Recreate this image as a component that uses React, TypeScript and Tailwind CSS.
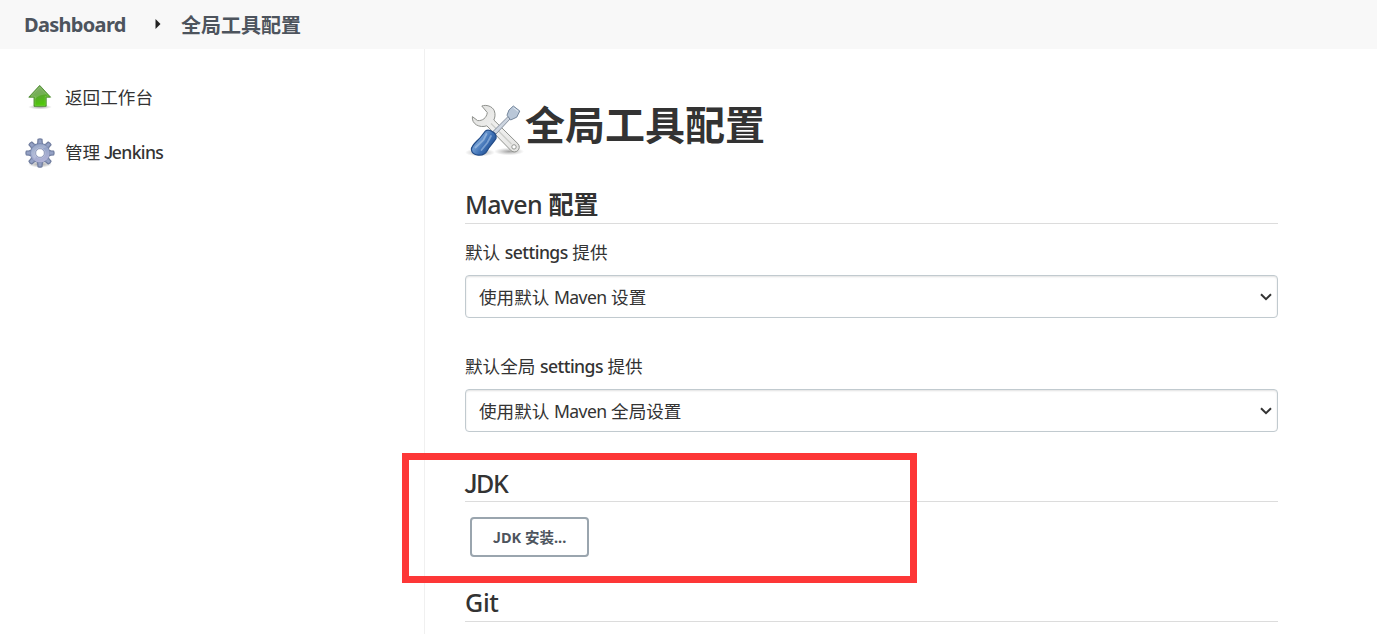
import React from "react";

function UpArrowIcon() {
  return (
    <svg width="30" height="30" viewBox="0 0 30 30" className="shrink-0">
      <defs>
        <linearGradient id="up-fill" x1="0" y1="0" x2="0.3" y2="1">
          <stop offset="0" stopColor="#6f9f55" />
          <stop offset="0.5" stopColor="#5a9f35" />
          <stop offset="1" stopColor="#4fc80a" />
        </linearGradient>
        <radialGradient id="up-shadow">
          <stop offset="0" stopColor="#000" stopOpacity="0.35" />
          <stop offset="1" stopColor="#000" stopOpacity="0" />
        </radialGradient>
      </defs>
      <ellipse cx="15" cy="25" rx="12" ry="2.4" fill="url(#up-shadow)" />
      <path d="M14.7 3.4 25.6 15.2H21.2V24.3H9V15.2H3.8Z" fill="url(#up-fill)" stroke="#4c8a30" strokeWidth="0.9" strokeLinejoin="round" />
      <path d="M14.7 5 23.4 14.3H20.2V23.3H10V14.3H6Z" fill="none" stroke="#b9eb8f" strokeOpacity="0.3" strokeWidth="0.8" />
      <path d="M14.7 4.4 22 12.2Q14 12.5 10 17V14.5H5.5Z" fill="#fff" opacity="0.16" />
    </svg>
  );
}

function GearIcon() {
  const teeth = [0, 45, 90, 135, 180, 225, 270, 315];
  return (
    <svg width="30" height="30" viewBox="0 0 30 30" className="mt-px shrink-0">
      <defs>
        <linearGradient id="gear-fill" gradientUnits="userSpaceOnUse" x1="10" y1="1" x2="18" y2="29">
          <stop offset="0" stopColor="#6f83ae" />
          <stop offset="0.45" stopColor="#98a6ca" />
          <stop offset="1" stopColor="#bdb8dc" />
        </linearGradient>
        <radialGradient id="gear-shadow">
          <stop offset="0" stopColor="#000" stopOpacity="0.4" />
          <stop offset="1" stopColor="#000" stopOpacity="0" />
        </radialGradient>
      </defs>
      <ellipse cx="15" cy="26.3" rx="12" ry="3.2" fill="url(#gear-shadow)" />
      <g stroke="#6f7c9e" strokeWidth="1.2" strokeLinejoin="round" fill="#93a0c4">
        {teeth.map((a) => (
          <path key={a} d="M11.4 7.5 12.8 4.4 13 1.4Q15 .5 17 1.4L17.2 4.4 18.6 7.5Z" transform={`rotate(${a} 15 15)`} />
        ))}
        <circle cx="15" cy="15" r="9.2" />
      </g>
      <circle cx="15" cy="15" r="9.6" fill="url(#gear-fill)" />
      <path d="M6.2 15a9 9 0 0 1 15.5-5.9Q13 11 10 21Q7 19 6.2 15" fill="#fff" opacity="0.2" />
      <circle cx="15" cy="15" r="5.2" fill="none" stroke="#c3c9df" strokeWidth="0.8" opacity="0.6" />
      <circle cx="15" cy="15" r="4.3" fill="#fff" stroke="#8792b2" strokeWidth="0.8" />
    </svg>
  );
}

function ToolsIcon() {
  return (
    <svg width="60" height="60" viewBox="0 0 60 60" className="shrink-0">
      <defs>
        <linearGradient id="wrench" x1="0" y1="0" x2="1" y2="1">
          <stop offset="0" stopColor="#dededc" />
          <stop offset="0.5" stopColor="#f1f1f0" />
          <stop offset="1" stopColor="#e2e2e0" />
        </linearGradient>
        <linearGradient id="handle" x1="0" y1="0" x2="1" y2="0.7">
          <stop offset="0" stopColor="#2c5b9d" />
          <stop offset="0.4" stopColor="#6c99d0" />
          <stop offset="0.65" stopColor="#3c6fb4" />
          <stop offset="1" stopColor="#204a87" />
        </linearGradient>
        <radialGradient id="tool-shadow">
          <stop offset="0" stopColor="#000" stopOpacity="0.36" />
          <stop offset="0.6" stopColor="#000" stopOpacity="0.13" />
          <stop offset="1" stopColor="#000" stopOpacity="0" />
        </radialGradient>
      </defs>
      <ellipse cx="15" cy="52.5" rx="15" ry="4" fill="url(#tool-shadow)" />
      <ellipse cx="44" cy="51.5" rx="15" ry="3.8" fill="url(#tool-shadow)" />
      <path
        d="M16.8 6 C21 4.4 27.3 6 29.3 10.8 C30.6 14.5 30 17.5 28.8 20 L53 43.8 C57 48.8 50.8 54.4 46.2 50.8 L21.8 25.8 C14.5 28.3 6.4 24 7.4 16.6 L12.6 20.6 C17.5 21 21.5 18 22.3 12.6 Z"
        fill="url(#wrench)" stroke="#8f918d" strokeWidth="1" strokeLinejoin="round"
      />
      <path d="M26 23.5 46.5 44" stroke="#cccdca" strokeWidth="1.3" />
      <circle cx="49" cy="46.9" r="2.2" fill="#fff" stroke="#8b8d89" strokeWidth="0.9" />
      <path d="M28 31.5 43.2 16.4 45.4 18.6 31 34Z" fill="#cdd5e0" stroke="#7d8796" strokeWidth="0.9" />
      <path d="M42 15.2 44 10 48.3 6 54.8 11 51.7 17.2 45.6 20Z" fill="#b9c7d8" stroke="#74869c" strokeWidth="1" strokeLinejoin="round" />
      <path d="M48.5 7.8 53 11.2" stroke="#e4ebf3" strokeWidth="1" />
      <path d="M20.5 31C24 28.5 32.3 33 31 38.5C28.5 43 25 45 22 51C18.5 57.3 7 56 6.4 49.5C6.4 44.5 13.5 40.5 16.5 36Z" fill="url(#handle)" stroke="#204a87" strokeWidth="1.2" />
      <path d="M21.5 34 18.5 40 10.5 47.5M26 36 22.5 42.5 16.5 50" fill="none" stroke="#bcd3ef" strokeWidth="1.8" strokeLinecap="round" opacity="0.5" />
    </svg>
  );
}

function SelectBox({ children }: { children: React.ReactNode }) {
  return (
    <button
      type="button"
      className="flex h-[43px] w-full items-center justify-between rounded-[4px] border border-[#c1cacf] bg-white pr-[5px] pl-[13px] text-left text-[17.6px] leading-6 shadow-[inset_0_1px_2px_rgba(0,0,0,0.12)]"
    >
      <span className="whitespace-nowrap pt-px">{children}</span>
      <svg width="12" height="8" viewBox="0 0 12 8" fill="none" stroke="#333" strokeWidth="2">
        <path d="M1 1.2 6 6.2 11 1.2" />
      </svg>
    </button>
  );
}

function SectionTitle({ children }: { children: React.ReactNode }) {
  return (
    <h2 className="h-9 border-b border-[#dcdcdc] text-[25px] leading-[32px] font-medium whitespace-nowrap">{children}</h2>
  );
}

export default function App() {
  return (
    <div className="relative flex h-[634px] w-[1377px] flex-col overflow-hidden bg-white font-['Noto_Sans','Noto_Sans_CJK_SC',sans-serif] text-[#333]">
      <header className="flex h-[49px] shrink-0 items-center bg-[#f8f8f8] pl-6 text-[20px] font-bold text-[#4d545d]">
        <span className="w-[131px] tracking-[-0.7px]">Dashboard</span>
        <svg width="6" height="10" viewBox="0 0 6 10" className="mb-0.5">
          <path d="M0.5 0 5.5 5 0.5 10Z" fill="#222" />
        </svg>
        <span className="ml-5 pt-0.5">全局工具配置</span>
      </header>

      <div className="flex flex-1">
        <nav className="flex w-[425px] shrink-0 flex-col gap-[25px] border-r border-[#f0f0f0] pt-[33px] pl-[25px] text-[17.6px]">
          <a className="flex h-[30px] items-center gap-[10px]">
            <UpArrowIcon />
            <span>返回工作台</span>
          </a>
          <a className="flex h-[30px] items-center gap-[10px]">
            <GearIcon />
            <span>
              管理{" "}
              <span className="font-medium tracking-[-0.65px]">
                <span className="-mr-px -ml-px font-['Noto_Sans_CJK_SC',sans-serif]">J</span>enkins
              </span>
            </span>
          </a>
        </nav>

        <main className="w-[853px] pl-10">
          <h1 className="mt-[51px] flex h-[60px] items-center text-[40px] leading-[60px] font-bold">
            <ToolsIcon />
            <span className="-mt-2.5">全局工具配置</span>
          </h1>

          <section className="mt-[28px]">
            <SectionTitle>
              <span className="tracking-[-0.7px]">Maven</span> <span className="font-bold">配置</span>
            </SectionTitle>
            <div className="mt-[15px] h-9 text-[17.6px] leading-[26px]">
              默认 <span className="font-medium tracking-[-0.55px]">settings</span> 提供
            </div>
            <SelectBox>
              使用默认 <span className="tracking-[-0.6px]">Maven</span> 设置
            </SelectBox>
            <div className="mt-[35px] h-9 text-[17.6px] leading-[26px]">
              默认全局 <span className="font-medium tracking-[-0.55px]">settings</span> 提供
            </div>
            <SelectBox>
              使用默认 <span className="tracking-[-0.6px]">Maven</span> 全局设置
            </SelectBox>
          </section>

          <section className="mt-[34px]">
            <SectionTitle>
              <span className="-mr-px -ml-px font-['Noto_Sans_CJK_SC',sans-serif] tracking-[-0.8px]">J</span>
              <span className="tracking-[-1.2px]">DK</span>
            </SectionTitle>
            <button
              type="button"
              className="mt-[15px] ml-[5px] flex h-10 w-[119px] items-center justify-center rounded-[4px] border-2 border-[#9aa5ae] bg-white text-[14.5px] font-bold whitespace-nowrap text-[#4d545d]"
            >
              <span>
                <span className="font-['Noto_Sans_CJK_SC',sans-serif]">J</span>DK 安装...
              </span>
            </button>
          </section>

          <section className="mt-[29px]">
            <SectionTitle>
              <span className="tracking-[-0.3px]">Git</span>
            </SectionTitle>
          </section>
        </main>
      </div>

      <div className="pointer-events-none absolute top-[453px] left-[402px] h-[130px] w-[515px] border-[7px] border-[#fd3737]" />
    </div>
  );
}
